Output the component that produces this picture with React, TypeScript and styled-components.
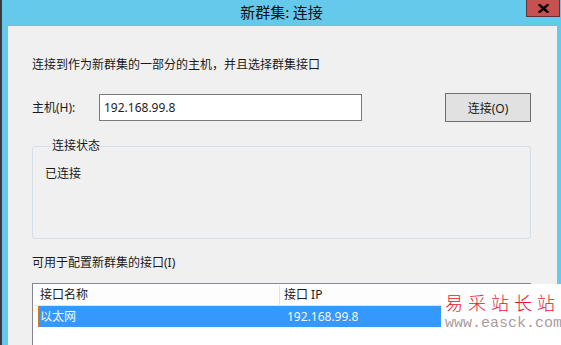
import React from "react";
import styled, { createGlobalStyle } from "styled-components";

const GlobalStyle = createGlobalStyle`
  html, body { margin: 0; padding: 0; background: #f0f0f0; }
  body { font-family: "Noto Sans", "Noto Sans CJK SC", sans-serif; }
  * { box-sizing: border-box; }
`;

const FONT = `"Noto Sans", "Noto Sans CJK SC", sans-serif`;

const Window = styled.div`
  position: relative;
  width: 561px;
  height: 345px;
  overflow: hidden;
  display: flex;
  flex-direction: column;
  background: #64c9ea;
  border-left: 2px solid #3a3d40;
  font-family: ${FONT};
  color: #1a1a1a;
`;

const TitleBar = styled.div`
  height: 25px;
  flex: none;
  display: grid;
  grid-template-columns: 1fr auto 1fr;
`;

const Title = styled.div`
  grid-column: 2;
  align-self: center;
  font-size: 15px;
  line-height: 20px;
  margin-top: -1px;
  color: #111;
  font-family: "Noto Sans CJK SC", sans-serif;
`;

const CloseButton = styled.div`
  grid-column: 3;
  justify-self: end;
  align-self: start;
  width: 34px;
  height: 17px;
  margin-right: 1px;
  background: #c75050;
  border: 1px solid #5e3232;
  border-top: none;
  display: flex;
  align-items: center;
  justify-content: center;
`;

const Body = styled.div`
  flex: 1;
  margin: 0 4px 0 6px;
  background: #f0f0f0;
  border-top: 1px solid #8fb4c6;
  padding: 31px 26px 0 24px;
  display: flex;
  flex-direction: column;
`;

const Text = styled.div`
  font-size: 12px;
  line-height: 16px;
  font-family: ${FONT};
  color: #1a1a1a;
`;

const HostRow = styled.div`
  margin-top: 20px;
  height: 29px;
  display: flex;
  align-items: center;
`;

const Label = styled(Text)`
  width: 67px;
  flex: none;
`;

const Input = styled.input`
  width: 263px;
  height: 27px;
  border: 1px solid #7a7a7a;
  background: #fff;
  padding: 0 0 0 4px;
  font-size: 12px;
  font-family: ${FONT};
  color: #1e1e1e;
  outline: none;
`;

const Button = styled.button`
  margin-left: auto;
  width: 86px;
  height: 29px;
  background: #e1e1e1;
  border: 1px solid #707070;
  font-size: 12px;
  font-family: ${FONT};
  color: #1a1a1a;
  padding: 0;
`;

const Group = styled.fieldset`
  margin: 16px 0 0 0;
  padding: 12px 12px 0 12px;
  border: 1px solid #d5dfe5;
  border-radius: 3px;
  min-width: 0;
`;

const Legend = styled.legend`
  margin-left: 6px;
  padding: 0 1px;
  font-size: 12px;
  line-height: 16px;
  color: #1a1a1a;
`;

const GroupContent = styled(Text)`
  height: 72px;
`;

const SectionLabel = styled(Text)`
  margin-top: 16px;
`;

const List = styled.div`
  margin-top: 12px;
  height: 80px;
  border: 1px solid #828790;
  background: #fff;
  padding: 1px 0 0 1px;
`;

const HeaderRow = styled.div`
  display: grid;
  grid-template-columns: 246px 1fr;
  height: 21px;
  border-bottom: 1px solid #e5e5e5;
  background: #fdfdfd;
`;

const HeaderCell = styled.div<{ $pad: number; $divider?: boolean }>`
  font-size: 12px;
  line-height: 20px;
  padding-left: ${(p) => p.$pad}px;
  border-right: ${(p) => (p.$divider ? "1px solid #e5e5e5" : "none")};
  color: #1a1a1a;
  white-space: nowrap;
`;

const ItemRow = styled.div<{ $selected?: boolean }>`
  margin-left: 4px;
  height: 21px;
  display: grid;
  grid-template-columns: 242px 1fr;
  background: ${(p) => (p.$selected ? "#3399ff" : "transparent")};
  border: 1px dotted ${(p) => (p.$selected ? "#d2781e" : "transparent")};
`;

const ItemCell = styled.div<{ $pad: number }>`
  font-size: 12px;
  line-height: 19px;
  padding-left: ${(p) => p.$pad}px;
  color: #f4f6ff;
  white-space: nowrap;
`;

const Watermark = styled.div`
  position: absolute;
  right: 0;
  bottom: 0;
  width: 120px;
  height: 61px;
  background: #fff;
  padding: 7px 0 0 4px;
  display: flex;
  flex-direction: column;
`;

const WatermarkTitle = styled.div`
  font-family: "Noto Sans CJK SC", serif;
  font-weight: 300;
  font-size: 18px;
  line-height: 22px;
  letter-spacing: 5px;
  color: #e8102a;
  white-space: nowrap;
`;

const WatermarkUrl = styled.div`
  margin-top: 3px;
  font-family: "Liberation Mono", monospace;
  font-size: 15px;
  line-height: 16px;
  color: #ab9c9c;
  white-space: nowrap;
`;

export default function App() {
  return (
    <>
      <GlobalStyle />
      <Window>
        <TitleBar>
          <Title>新群集: 连接</Title>
          <CloseButton>
            <svg width="11" height="9" viewBox="0 0 11 9">
              <path d="M1.5 1 L9.5 8 M9.5 1 L1.5 8" stroke="#000" strokeWidth="2.4" strokeLinecap="square" />
            </svg>
          </CloseButton>
        </TitleBar>
        <Body>
          <Text>连接到作为新群集的一部分的主机，并且选择群集接口</Text>
          <HostRow>
            <Label>主机(H):</Label>
            <Input defaultValue="192.168.99.8" readOnly />
            <Button>连接(O)</Button>
          </HostRow>
          <Group>
            <Legend>连接状态</Legend>
            <GroupContent>已连接</GroupContent>
          </Group>
          <SectionLabel>可用于配置新群集的接口(I)</SectionLabel>
          <List>
            <HeaderRow>
              <HeaderCell $pad={6} $divider>接口名称</HeaderCell>
              <HeaderCell $pad={4}>接口 IP</HeaderCell>
            </HeaderRow>
            <ItemRow $selected>
              <ItemCell $pad={1}>以太网</ItemCell>
              <ItemCell $pad={6}>192.168.99.8</ItemCell>
            </ItemRow>
          </List>
        </Body>
        <Watermark>
          <WatermarkTitle>易采站长站</WatermarkTitle>
          <WatermarkUrl>www.easck.com</WatermarkUrl>
        </Watermark>
      </Window>
    </>
  );
}
